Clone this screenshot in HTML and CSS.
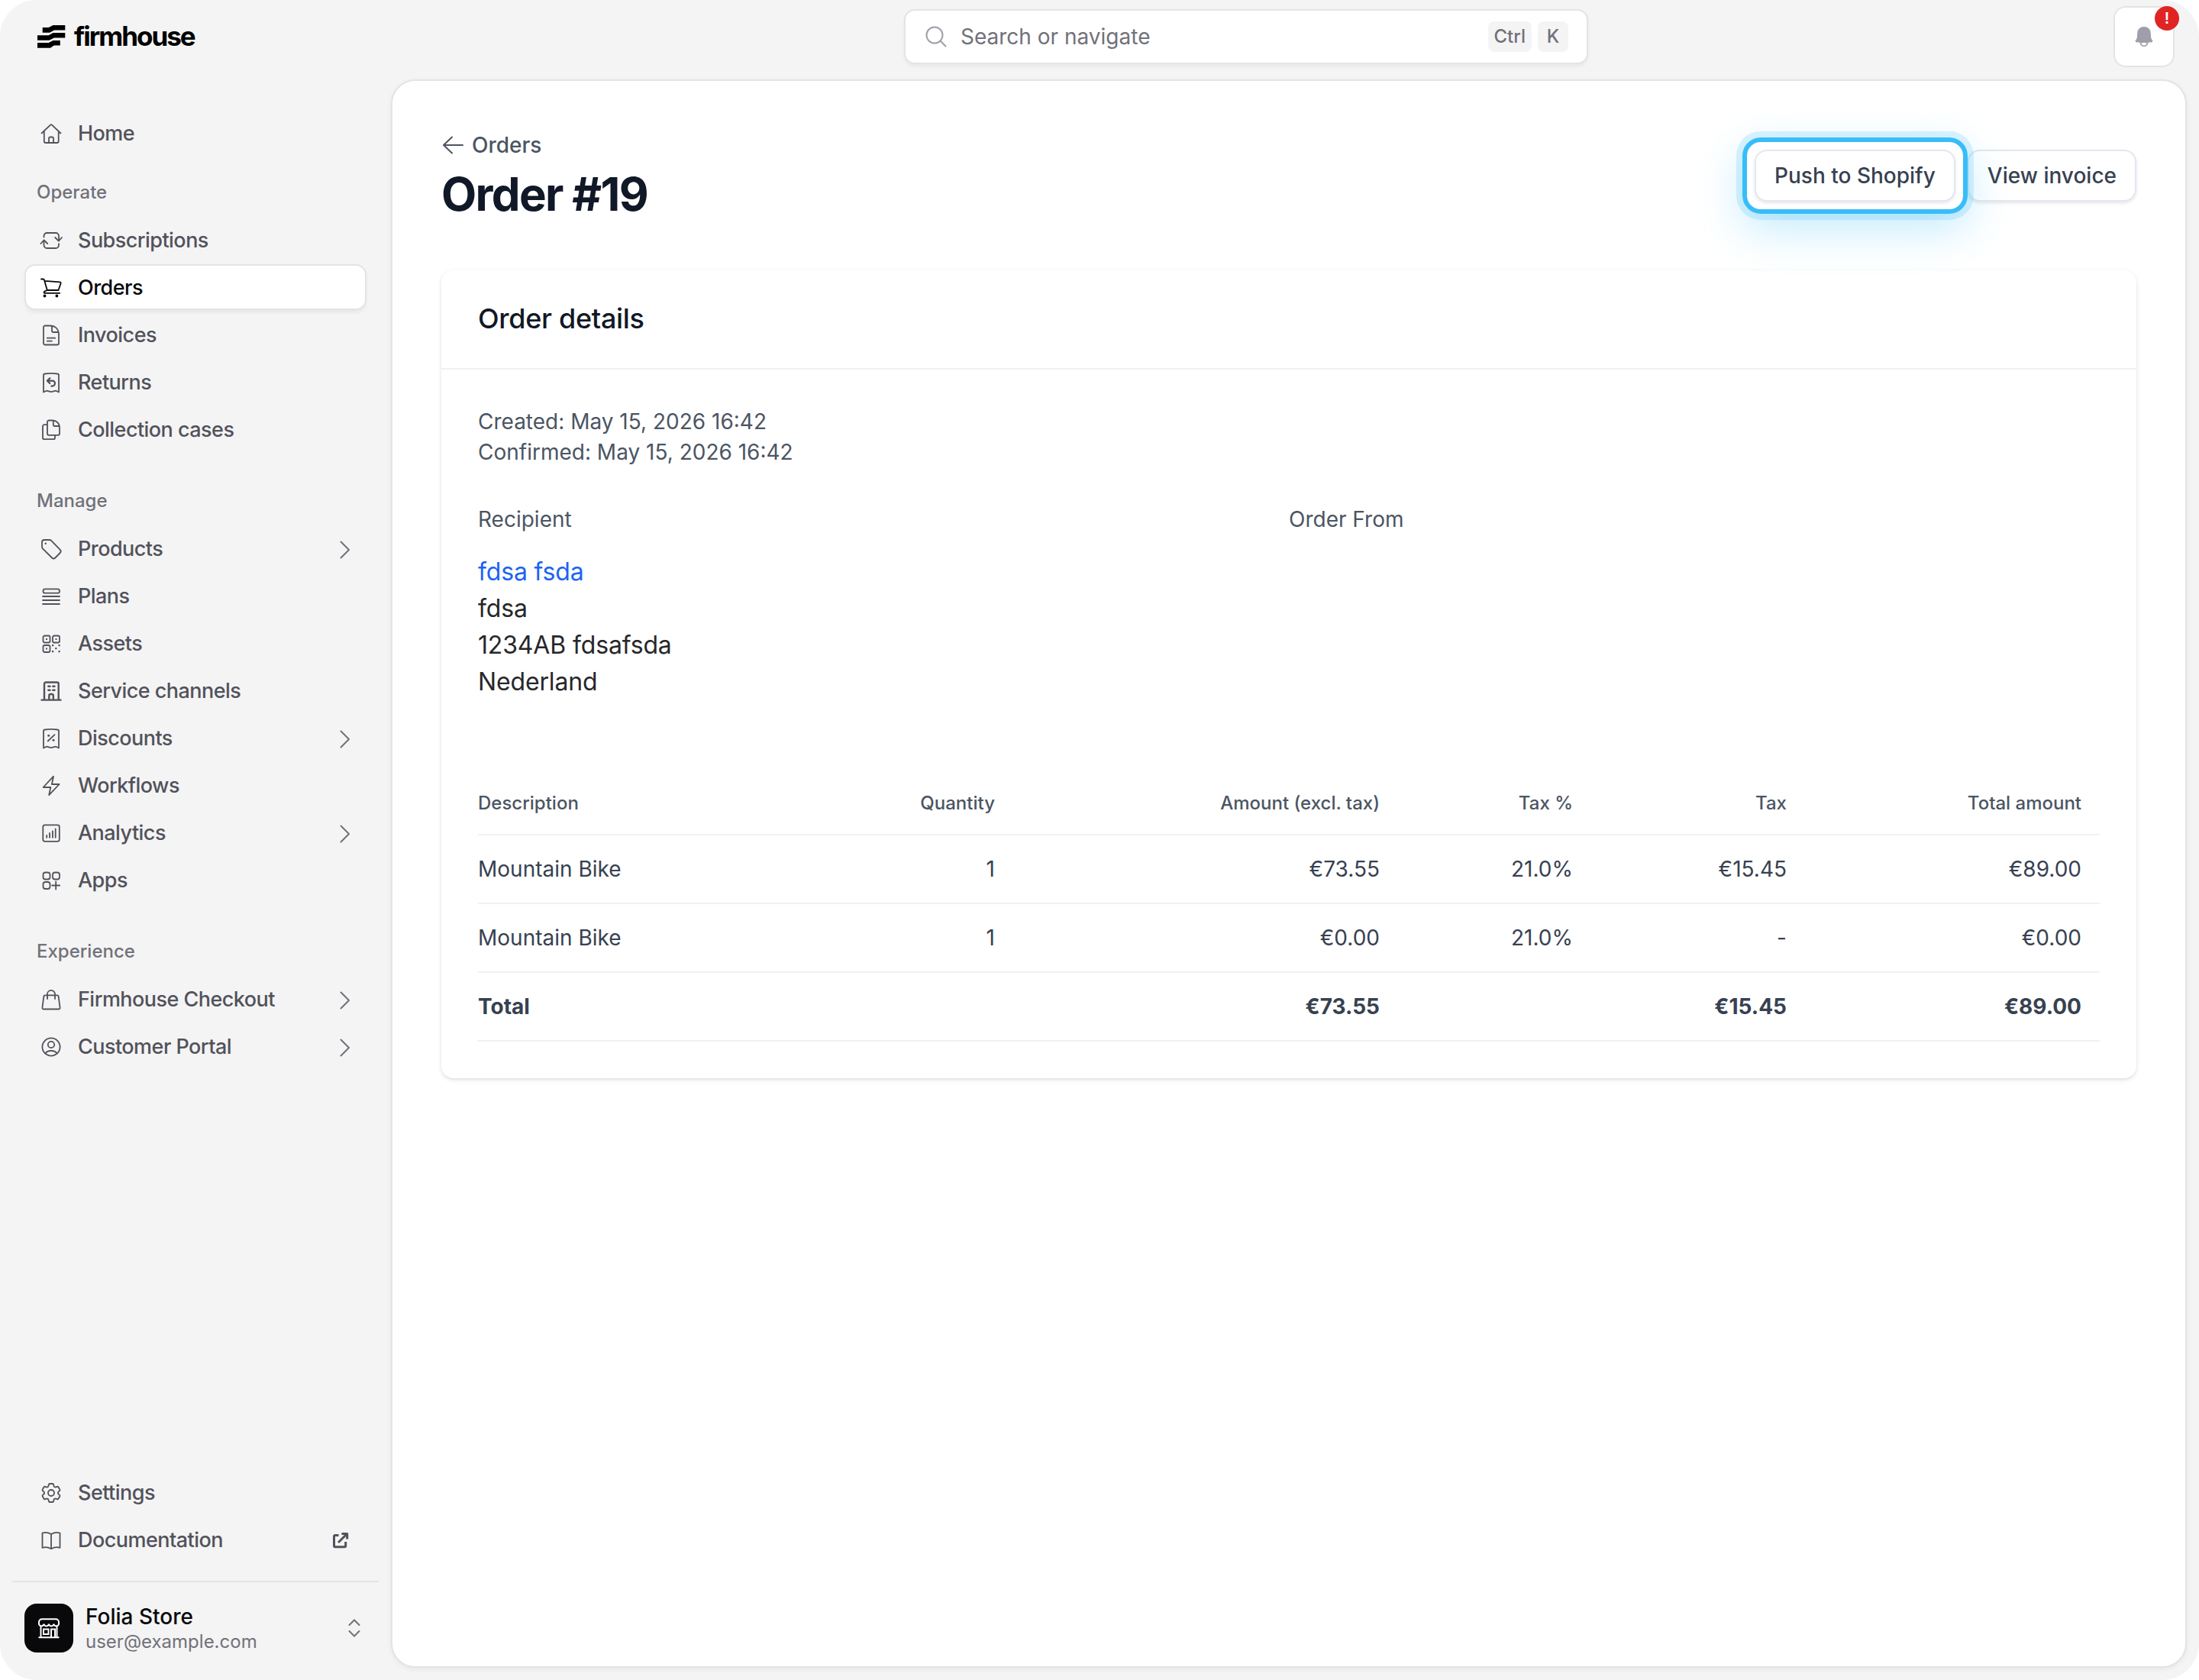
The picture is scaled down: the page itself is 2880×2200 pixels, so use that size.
FILE: index.html
```html
<!DOCTYPE html>
<html lang="en">
<head>
    <meta charset="utf-8"/>
    <title>Order #19 - Firmhouse</title>
    <link rel="stylesheet" href="styles.css">
</head>
<body>
    <div class="app">
        <header class="topbar">
            <a class="logo">
                <svg class="logo-mark" viewBox="0 0 37 30">
                    <path d="M6.7 3h8L20.5 0h15.8v6.6H22L16 9.8H6.7zM0 13.3h14.7L20.5 10h15.8v6.6H22l-6.6 3.2H0zM0 23h14.7l5.8-3h9.3v6.5h-8L17 29.8H0z"/>
                </svg>
                <span class="logo-text">firmhouse</span>
            </a>
            <div class="search">
                <svg class="search-icon" viewBox="0 0 28 28"><circle cx="12" cy="12" r="10.5"/><path d="M19.5 19.5l7 7"/></svg>
                <span class="search-text">Search or navigate</span>
                <kbd>Ctrl</kbd>
                <kbd>K</kbd>
            </div>
            <div class="bell">
                <svg viewBox="0 0 24 26"><path fill-rule="evenodd" d="M12 0C7 0 3.500 3.400 3.300 8L2.900 13.500C2.800 15.200 2 16.600.9 17.900.2 18.800.6 20 1.800 20.200L6.600 20.800A5.400 5.400 0 0 0 17.400 20.800L22.200 20.200C23.400 20 23.800 18.800 23.100 17.900 22 16.600 21.200 15.200 21.100 13.500L20.700 8C20.500 3.400 17 0 12 0ZM8.600 21H15.400A3.400 3.400 0 0 1 8.600 21Z"/></svg>
                <span class="bell-badge">!</span>
            </div>
        </header>

        <div class="layout">
            <aside class="sidebar">
                <nav class="nav-group">
                    <a class="nav-item">
                        <svg class="icon" viewBox="0 0 32 32"><path d="M3.500 15.500L15 4.600a1.500 1.500 0 0 1 2 0L28.500 15.500M6.800 12.600V26a2 2 0 0 0 2 2h14.900a2 2 0 0 0 2-2V12.600M13 28v-5.500a2 2 0 0 1 2-2h2a2 2 0 0 1 2 2V28"/></svg>
                        <span>Home</span>
                    </a>
                </nav>

                <h3 class="nav-label first">Operate</h3>
                <nav class="nav-group">
                    <a class="nav-item">
                        <svg class="icon" viewBox="0 0 32 32"><path d="M6.500 11.500V10a4 4 0 0 1 4-4H22a4 4 0 0 1 4 4v6M21.200 12l4.600 4.600L30 12M11.200 20l-4.500-4.600L2.400 20M6.500 16v6a4 4 0 0 0 4 4H22a4 4 0 0 0 4-4v-1.800"/></svg>
                        <span>Subscriptions</span>
                    </a>
                    <a class="nav-item active">
                        <svg class="icon" viewBox="0 0 32 32"><path d="M3 4.500h2.500a1.500 1.500 0 0 1 1.500 1.200L10.800 19M7.600 6.900l19.800 1.400a1.300 1.300 0 0 1 1.200 1.700L25.500 19H10.800M10.800 19l-3.300 1.600c-1.500.8-1 2.300.2 2.300h19.500"/><circle class="dot" cx="7.500" cy="26.500" r="1.900"/><circle class="dot" cx="23.400" cy="26.500" r="1.900"/></svg>
                        <span>Orders</span>
                    </a>
                    <a class="nav-item">
                        <svg class="icon" viewBox="0 0 32 32"><path d="M8 3.500h6c7.500 0 12 4.500 12 12v11a2 2 0 0 1-2 2H8a2 2 0 0 1-2-2v-21a2 2 0 0 1 2-2zM17 4v6a2 2 0 0 0 2 2h6.500M10.800 19.700h10.400M10.800 23.700h6"/></svg>
                        <span>Invoices</span>
                    </a>
                    <a class="nav-item">
                        <svg class="icon" viewBox="0 0 32 32"><path d="M6 28.500V6.500a2 2 0 0 1 1.800-2q8.200-1.400 16.400 0a2 2 0 0 1 1.800 2v22l-3.800-1.800c-2 0-4 1.500-6.200 1.500s-4-1.500-6.200-1.500z"/><path class="thick" d="M14.300 10.200l-3.400 3.400 3.400 3.400M11 13.600h6.500a3.500 3.500 0 0 1 0 7h-1.300"/></svg>
                        <span>Returns</span>
                    </a>
                    <a class="nav-item">
                        <svg class="icon" viewBox="0 0 32 32"><path d="M13 3.500h4c6 0 10 4 10 9.500v7.800a2 2 0 0 1-2 2H13a2 2 0 0 1-2-2V5.500a2 2 0 0 1 2-2zM18.800 4v5a2 2 0 0 0 2 2h5.800M11 9.200H7a2 2 0 0 0-2 2v15a2 2 0 0 0 2 2h12a2 2 0 0 0 2-2v-3.400"/></svg>
                        <span>Collection cases</span>
                    </a>
                </nav>

                <h3 class="nav-label">Manage</h3>
                <nav class="nav-group">
                    <a class="nav-item">
                        <svg class="icon" viewBox="0 0 32 32"><path d="M7 4h7a3 3 0 0 1 2.100.9L27.700 16.800a3 3 0 0 1 0 4.200L21.300 27.500a3 3 0 0 1-4.200 0L4.900 15.300A3 3 0 0 1 4 13.200V7a3 3 0 0 1 3-3z"/><circle class="dot" cx="8.700" cy="8.700" r="1.200"/></svg>
                        <span>Products</span>
                        <svg class="chevron" viewBox="0 0 14 24"><path d="M1.500 1.500L12 12 1.500 22.500"/></svg>
                    </a>
                    <a class="nav-item">
                        <svg class="icon" viewBox="0 0 32 32"><rect x="5.500" y="6.300" width="21.500" height="5.400" rx="2.500"/><path d="M5 16h22M5 21h22M5 26h22"/></svg>
                        <span>Plans</span>
                    </a>
                    <a class="nav-item">
                        <svg class="icon" viewBox="0 0 32 32"><rect x="5.500" y="5.500" width="9" height="9" rx="2"/><rect x="18" y="5.500" width="9" height="9" rx="2"/><rect x="5.500" y="18" width="9" height="9" rx="2"/><path class="dot" d="M9 9h2v2h-2zM21.500 9h2v2h-2zM9 21.500h2v2h-2zM17 17h2.200v2.200h-2.200zM25.500 17h2.200v2.200h-2.200zM21.200 21h2.200v2.200h-2.200zM17 25h2.200v2.200h-2.200zM25.500 25h2.200v2.200h-2.200z"/></svg>
                        <span>Assets</span>
                    </a>
                    <a class="nav-item">
                        <svg class="icon bold" viewBox="0 0 32 32"><path d="M3.500 27.600h25M7 27V6.500a2 2 0 0 1 2-2h14.700a2 2 0 0 1 2 2V27M13.300 27v-5a2 2 0 0 1 2-2h1.500a2 2 0 0 1 2 2v5M12.300 9.800h2.200M18.300 9.800h2.200M12.300 14.800h2.200M18.300 14.800h2.200"/></svg>
                        <span>Service channels</span>
                    </a>
                    <a class="nav-item">
                        <svg class="icon" viewBox="0 0 32 32"><path d="M6 28.500V6.500a2 2 0 0 1 1.800-2q8.200-1.400 16.400 0a2 2 0 0 1 1.800 2v22l-3.800-1.800c-2 0-4 1.500-6.200 1.500s-4-1.500-6.200-1.500zM11.700 19.500l8.800-8.300"/><circle class="dot" cx="12.700" cy="12.200" r="1.500"/><circle class="dot" cx="19" cy="18.300" r="1.500"/></svg>
                        <span>Discounts</span>
                        <svg class="chevron" viewBox="0 0 14 24"><path d="M1.500 1.500L12 12 1.500 22.500"/></svg>
                    </a>
                    <a class="nav-item">
                        <svg class="icon" viewBox="0 0 32 32"><path d="M19 3.700L16.900 14h9.700L13.200 28.200 15.300 18H5.600z"/></svg>
                        <span>Workflows</span>
                    </a>
                    <a class="nav-item">
                        <svg class="icon" viewBox="0 0 32 32"><rect x="5.300" y="5.300" width="21.500" height="21.500" rx="2.500"/><path d="M10.200 21.800v-3M14 21.800v-5.800M17.900 21.800v-8.500M21.700 21.800V10.500"/></svg>
                        <span>Analytics</span>
                        <svg class="chevron" viewBox="0 0 14 24"><path d="M1.500 1.500L12 12 1.500 22.500"/></svg>
                    </a>
                    <a class="nav-item">
                        <svg class="icon" viewBox="0 0 32 32"><rect x="5.500" y="5.500" width="9" height="9" rx="3"/><rect x="18" y="5.500" width="9" height="9" rx="3"/><rect x="5.500" y="18" width="9" height="9" rx="3"/><path d="M22.200 17.500v10M17.200 22.500h10"/></svg>
                        <span>Apps</span>
                    </a>
                </nav>

                <h3 class="nav-label">Experience</h3>
                <nav class="nav-group">
                    <a class="nav-item">
                        <svg class="icon" viewBox="0 0 32 32"><path d="M8 10.300h16a1.600 1.600 0 0 1 1.600 1.400l2 15a1.500 1.500 0 0 1-1.600 1.800H6a1.500 1.500 0 0 1-1.600-1.800l2-15A1.600 1.600 0 0 1 8 10.300zM11 15V8.800a5 5 0 0 1 10 0V15"/></svg>
                        <span>Firmhouse Checkout</span>
                        <svg class="chevron" viewBox="0 0 14 24"><path d="M1.500 1.500L12 12 1.500 22.500"/></svg>
                    </a>
                    <a class="nav-item">
                        <svg class="icon" viewBox="0 0 32 32"><circle cx="16" cy="16" r="11.600"/><circle cx="16" cy="13" r="4.200"/><path d="M8.300 24.500c1.500-2.300 4-3.500 7.700-3.500s6.200 1.200 7.700 3.500"/></svg>
                        <span>Customer Portal</span>
                        <svg class="chevron" viewBox="0 0 14 24"><path d="M1.500 1.500L12 12 1.500 22.500"/></svg>
                    </a>
                </nav>

                <nav class="nav-group bottom">
                    <a class="nav-item">
                        <svg class="icon cog" viewBox="0 0 24 24"><path d="M9.594 3.940c.09-.542.56-.94 1.110-.94h2.593c.55 0 1.020.398 1.110.94l.213 1.281c.063.374.313.686.645.87.074.04.147.083.22.127.325.196.72.257 1.075.124l1.217-.456a1.125 1.125 0 0 1 1.370.49l1.296 2.247a1.125 1.125 0 0 1-.26 1.431l-1.003.827c-.293.241-.438.613-.43.992a7.723 7.723 0 0 1 0 .255c-.008.378.137.75.43.991l1.004.827c.424.35.534.955.26 1.430l-1.298 2.247a1.125 1.125 0 0 1-1.369.491l-1.217-.456c-.355-.133-.75-.072-1.076.124a6.470 6.470 0 0 1-.22.128c-.331.183-.581.495-.644.869l-.213 1.281c-.09.543-.56.94-1.110.94h-2.594c-.55 0-1.019-.398-1.110-.94l-.213-1.281c-.062-.374-.312-.686-.644-.87a6.520 6.520 0 0 1-.22-.127c-.325-.196-.72-.257-1.076-.124l-1.217.456a1.125 1.125 0 0 1-1.369-.49l-1.297-2.247a1.125 1.125 0 0 1 .26-1.431l1.004-.827c.292-.24.437-.613.43-.991a6.932 6.932 0 0 1 0-.255c.007-.38-.138-.751-.43-.992l-1.004-.827a1.125 1.125 0 0 1-.26-1.430l1.297-2.247a1.125 1.125 0 0 1 1.370-.491l1.216.456c.356.133.751.072 1.076-.124.072-.044.146-.086.22-.128.332-.183.582-.495.644-.869l.214-1.280Z"/><circle cx="12" cy="12" r="3"/></svg>
                        <span>Settings</span>
                    </a>
                    <a class="nav-item">
                        <svg class="icon" viewBox="0 0 32 32"><path d="M16 8c-3.500-2-7.500-2.700-11.500-1.500v19.300c4-1.200 8-.6 11.500 1.400 3.500-2 7.500-2.600 11.500-1.400V6.500C23.500 5.300 19.500 6 16 8zM16 8v19"/></svg>
                        <span>Documentation</span>
                        <svg class="external" viewBox="0 0 32 32"><path d="M13.500 9.500H9a1.500 1.500 0 0 0-1.500 1.500v12.200A1.500 1.500 0 0 0 9 24.700h12.200a1.500 1.500 0 0 0 1.500-1.500V18M13 19L24.500 7.500M17.500 7.500h7.200v7"/></svg>
                    </a>
                </nav>

                <div class="account">
                    <div class="avatar">
                        <svg viewBox="0 0 32 32"><path d="M7 4.200h18a4 4 0 0 1 4 4v1a3.300 3.300 0 0 1-6.500 1.500 3.300 3.300 0 0 1-6.500 0 3.300 3.300 0 0 1-6.500 0A3.300 3.300 0 0 1 3 9.200v-1a4 4 0 0 1 4-4zM5.500 13v15M26.500 13v15M2.500 28.200h27M9 17.500h6.500v6.500H9zM19 28V17.500h5V28"/></svg>
                    </div>
                    <div class="account-info">
                        <div class="account-name">Folia Store</div>
                        <div class="account-email">user@example.com</div>
                    </div>
                    <svg class="updown" viewBox="0 0 16 24"><path d="M1.500 8L8 1.500 14.500 8M1.500 16L8 22.500 14.500 16"/></svg>
                </div>
            </aside>

            <main class="content">
                <div class="page-header">
                    <div>
                        <a class="back">
                            <svg viewBox="0 0 28 24"><path d="M13 1.500L2 12l11 10.500M2 12h25"/></svg>
                            Orders
                        </a>
                        <h1>Order #19</h1>
                    </div>
                    <div class="actions">
                        <div class="highlight"><button class="btn">Push to Shopify</button></div>
                        <button class="btn">View invoice</button>
                    </div>
                </div>

                <section class="card">
                    <h2>Order details</h2>
                    <div class="card-body">
                        <div class="muted">Created: May 15, 2026 16:42</div>
                        <div class="muted">Confirmed: May 15, 2026 16:42</div>
                        <div class="parties">
                            <div>
                                <div class="muted">Recipient</div>
                                <address>
                                    <a>fdsa fsda</a><br>
                                    fdsa<br>
                                    1234AB fdsafsda<br>
                                    Nederland
                                </address>
                            </div>
                            <div>
                                <div class="muted">Order From</div>
                            </div>
                        </div>
                        <table>
                            <colgroup>
                                <col class="col-desc"><col class="col-qty"><col class="col-amount"><col class="col-rate"><col class="col-tax"><col>
                            </colgroup>
                            <thead>
                                <tr>
                                    <th>Description</th>
                                    <th>Quantity</th>
                                    <th>Amount (excl. tax)</th>
                                    <th>Tax %</th>
                                    <th>Tax</th>
                                    <th>Total amount</th>
                                </tr>
                            </thead>
                            <tbody>
                                <tr>
                                    <td>Mountain Bike</td>
                                    <td>1</td>
                                    <td>€73.55</td>
                                    <td>21.0%</td>
                                    <td>€15.45</td>
                                    <td>€89.00</td>
                                </tr>
                                <tr>
                                    <td>Mountain Bike</td>
                                    <td>1</td>
                                    <td>€0.00</td>
                                    <td>21.0%</td>
                                    <td>-</td>
                                    <td>€0.00</td>
                                </tr>
                                <tr class="total">
                                    <td>Total</td>
                                    <td></td>
                                    <td>€73.55</td>
                                    <td></td>
                                    <td>€15.45</td>
                                    <td>€89.00</td>
                                </tr>
                            </tbody>
                        </table>
                    </div>
                </section>
            </main>
        </div>
    </div>
</body>
</html>
```
FILE: styles.css
```css
* {
    box-sizing: border-box;
}
html, body {
    margin: 0;
    padding: 0;
    background: #ffffff;
}
body {
    font-family: Inter, "Liberation Sans", sans-serif;
    font-size: 28px;
    line-height: 40px;
    color: #27272a;
}
h1, h2, h3 {
    margin: 0;
}
svg {
    display: block;
    flex-shrink: 0;
}
.app {
    display: flex;
    flex-direction: column;
    width: 2880px;
    height: 2200px;
    background: #f4f4f4;
    border-radius: 48px;
    overflow: hidden;
}

/* top bar */
.topbar {
    display: flex;
    align-items: flex-start;
    height: 104px;
    padding-right: 32px;
}
.logo {
    display: flex;
    align-items: center;
    flex: 0 0 1184px;
    height: 96px;
    padding-left: 49px;
    gap: 11px;
}
.logo-mark {
    width: 37px;
    height: 30px;
    fill: #000000;
}
.logo-text {
    padding-bottom: 2px;
    font-size: 35px;
    font-weight: 700;
    letter-spacing: -2px;
    color: #000000;
}
.search {
    display: flex;
    align-items: center;
    width: 896px;
    height: 72px;
    margin-top: 12px;
    padding: 0 24px 0 26px;
    background: #ffffff;
    border: 2px solid #e4e4e5;
    border-radius: 14px;
    box-shadow: 0 3px 5px rgba(0, 0, 0, 0.05);
}
.search-icon {
    width: 28px;
    height: 28px;
    fill: none;
    stroke: #9f9fa9;
    stroke-width: 2;
    stroke-linecap: round;
}
.search-text {
    flex: 1;
    margin-left: 18px;
    color: #71717a;
}
kbd {
    height: 40px;
    margin-left: 8px;
    padding: 0 8px;
    min-width: 40px;
    text-align: center;
    font-family: inherit;
    font-size: 24px;
    font-weight: 500;
    color: #71717a;
    background: #f4f4f5;
    border-radius: 8px;
}
.bell {
    position: relative;
    display: flex;
    align-items: center;
    justify-content: center;
    width: 80px;
    height: 80px;
    margin: 8px 0 0 auto;
    background: #ffffff;
    border: 2px solid #e4e4e5;
    border-radius: 16px;
}
.bell svg {
    width: 24px;
    height: 26px;
    fill: #9f9fa9;
}
.bell-badge {
    position: absolute;
    top: -2px;
    right: -8px;
    width: 32px;
    height: 32px;
    border-radius: 50%;
    background: #e02424;
    color: #ffffff;
    font-size: 20px;
    font-weight: 600;
    line-height: 32px;
    text-align: center;
}

/* sidebar */
.layout {
    display: flex;
    flex: 1;
    min-height: 0;
    padding: 0 16px 16px 0;
}
.sidebar {
    display: flex;
    flex-direction: column;
    width: 512px;
    height: 2096px;
    padding-top: 42px;
}
.nav-group {
    display: flex;
    flex-direction: column;
    gap: 6px;
    padding: 0 34px;
}
.nav-group.bottom {
    margin-top: auto;
}
.nav-label {
    margin: 51px 0 19px 48px;
    font-size: 24px;
    font-weight: 500;
    line-height: 30px;
    color: #71717a;
}
.nav-label.first {
    margin-top: 35px;
}
.nav-item {
    display: flex;
    align-items: center;
    height: 56px;
    padding: 0 14px 0 17px;
    border-radius: 12px;
    font-size: 27px;
    font-weight: 500;
    letter-spacing: -0.02em;
    color: #52525b;
}
.nav-item span {
    padding-top: 1px;
}
.nav-item.active {
    background: #ffffff;
    color: #09090b;
    box-shadow: 0 0 0 2px #e4e4e5, 0 4px 6px rgba(0, 0, 0, 0.08);
}
.icon {
    width: 32px;
    height: 32px;
    margin: 2px 19px 0 0;
    fill: none;
    stroke: currentColor;
    stroke-width: 1.8;
    stroke-linecap: round;
    stroke-linejoin: round;
}
.icon .dot {
    fill: currentColor;
    stroke: none;
}
.icon .thick {
    stroke-width: 2.2;
}
.icon.bold {
    stroke-width: 2.4;
}
.icon.cog {
    stroke-width: 1.35;
}
.chevron {
    width: 14px;
    height: 24px;
    margin: 4px 5px 0 auto;
    fill: none;
    stroke: #71717a;
    stroke-width: 2;
    stroke-linecap: round;
    stroke-linejoin: round;
}
.external {
    width: 32px;
    height: 32px;
    margin: 1px 2px 0 auto;
    fill: none;
    stroke: #52525b;
    stroke-width: 3;
    stroke-linejoin: round;
}
.account {
    display: flex;
    align-items: center;
    height: 130px;
    margin: 26px 16px 0;
    padding: 0 24px 8px 16px;
    border-top: 2px solid #e4e4e5;
}
.avatar {
    display: flex;
    align-items: center;
    justify-content: center;
    width: 64px;
    height: 64px;
    background: #09090b;
    border-radius: 16px;
}
.avatar svg {
    width: 32px;
    height: 32px;
    fill: none;
    stroke: #ffffff;
    stroke-width: 2;
}
.account-info {
    flex: 1;
    margin-left: 16px;
}
.account-name {
    font-weight: 500;
    line-height: 36px;
    color: #09090b;
}
.account-email {
    font-size: 24px;
    line-height: 30px;
    color: #71717a;
}
.updown {
    width: 16px;
    height: 24px;
    fill: none;
    stroke: #71717a;
    stroke-width: 2;
    stroke-linecap: round;
}

/* content */
.content {
    flex: 1;
    padding: 64px;
    background: #ffffff;
    border: 2px solid #e4e4e5;
    border-radius: 32px;
    box-shadow: 0 2px 6px rgba(0, 0, 0, 0.06);
}
.page-header {
    display: flex;
    justify-content: space-between;
    height: 184px;
}
.back {
    display: flex;
    align-items: center;
    gap: 11px;
    font-weight: 500;
    color: #4b5563;
}
.back svg {
    width: 28px;
    height: 24px;
    margin-left: 1px;
    fill: none;
    stroke: currentColor;
    stroke-width: 2;
    stroke-linecap: round;
    stroke-linejoin: round;
}
h1 {
    margin-top: 4px;
    font-size: 60px;
    font-weight: 700;
    line-height: 80px;
    letter-spacing: -0.028em;
    color: #111827;
}
.actions {
    display: flex;
    align-items: flex-start;
    gap: 16px;
    padding-top: 26px;
}
.btn {
    height: 68px;
    padding: 0 24px;
    background: #ffffff;
    border: 2px solid #e2e8f0;
    border-radius: 16px;
    box-shadow: 0 2px 4px rgba(0, 0, 0, 0.1);
    font: inherit;
    font-weight: 500;
    color: #374151;
    white-space: nowrap;
}
.highlight {
    position: relative;
}
.highlight::after {
    content: "";
    position: absolute;
    inset: -16px;
    border: 6px solid #38bdf8;
    border-radius: 24px;
    box-shadow: 0 0 0 8px rgba(56, 189, 248, 0.18), 0 20px 56px rgba(56, 189, 248, 0.3);
}
.card {
    background: #ffffff;
    border-radius: 16px;
    box-shadow: 0 2px 6px rgba(0, 0, 0, 0.1), 0 2px 4px -2px rgba(0, 0, 0, 0.1);
}
h2 {
    padding: 37px 48px 39px;
    font-size: 36px;
    font-weight: 500;
    line-height: 52px;
    letter-spacing: -0.3px;
    color: #111827;
    border-bottom: 2px solid #edf2f7;
}
.card-body {
    padding: 48px;
}
.muted {
    color: #4b5563;
}
.parties {
    display: grid;
    grid-template-columns: 1fr 1fr;
    margin-top: 48px;
}
address {
    margin-top: 25px;
    font-size: 32px;
    font-style: normal;
    line-height: 48px;
    letter-spacing: -0.15px;
}
address a {
    color: #1c64f2;
}

/* order lines */
table {
    width: 100%;
    margin-top: 94px;
    border-collapse: separate;
    border-spacing: 0;
    table-layout: fixed;
}
.col-desc {
    width: 500px;
}
.col-qty {
    width: 201px;
}
.col-amount {
    width: 504px;
}
.col-rate {
    width: 253px;
}
.col-tax {
    width: 280px;
}
th, td {
    padding: 24px 24px 24px 0;
    text-align: right;
    border-bottom: 2px solid #edf2f7;
}
th:first-child, td:first-child {
    text-align: left;
}
th {
    padding-top: 25px;
    font-size: 24px;
    font-weight: 500;
    line-height: 32px;
    color: #4b5563;
}
td {
    height: 90px;
    color: #374151;
}
.total td {
    font-weight: 700;
}
```
